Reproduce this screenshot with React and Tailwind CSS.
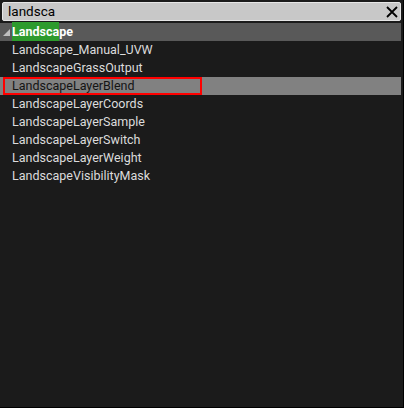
import React from 'react';

const items = [
  'Landscape_Manual_UVW',
  'LandscapeGrassOutput',
  'LandscapeLayerBlend',
  'LandscapeLayerCoords',
  'LandscapeLayerSample',
  'LandscapeLayerSwitch',
  'LandscapeLayerWeight',
  'LandscapeVisibilityMask',
];

export default function App() {
  return (
    <div className="w-[404px] h-[408px] bg-black" style={{ fontFamily: 'Roboto, sans-serif' }}>
      <div className="w-[403px] h-[407px] bg-[#1b1b1b] flex flex-col">
        <div className="px-[2px] pt-[2px] pb-[2px]">
          <div className="h-[19px] bg-[#c8c8c8] border border-[#e6e6e6] rounded-[2px] flex items-center pl-[5px] pr-[2px]">
            <span className="flex-1 text-[13.5px] text-black leading-none">landsca</span>
            <svg width="12" height="12" viewBox="0 0 12 12" className="shrink-0">
              <path d="M1 1 L11 11 M11 1 L1 11" stroke="#000" strokeWidth="1.8" />
            </svg>
          </div>
        </div>
        <div className="h-[18px] mr-[2px] bg-[#595959] flex items-center">
          <svg width="8" height="8" viewBox="0 0 8 8" className="ml-[3px] mt-[2px]">
            <polygon points="7,0 7,7 0,7" fill="#bdbdbd" />
          </svg>
          <span className="ml-[1px] text-[12.5px] font-bold text-white leading-none">
            <span className="bg-[#2d9b2d] py-[2px]">Landsca</span>pe
          </span>
        </div>
        <div className="flex flex-col">
          {items.map((t, i) => (
            <div
              key={t}
              className={
                'h-[18px] mr-[2px] flex items-center ' +
                (i === 2 ? 'bg-[#818181]' : '')
              }
            >
              {i === 2 ? (
                <div className="ml-[3px] w-[199px] h-[18px] border-2 border-[#ff0000] flex items-center pl-[7px]">
                  <span className="text-[12.5px] text-[#141414] leading-none">{t}</span>
                </div>
              ) : (
                <span className="ml-[12px] text-[12.5px] text-[#dcdcdc] leading-none">{t}</span>
              )}
            </div>
          ))}
        </div>
      </div>
    </div>
  );
}
